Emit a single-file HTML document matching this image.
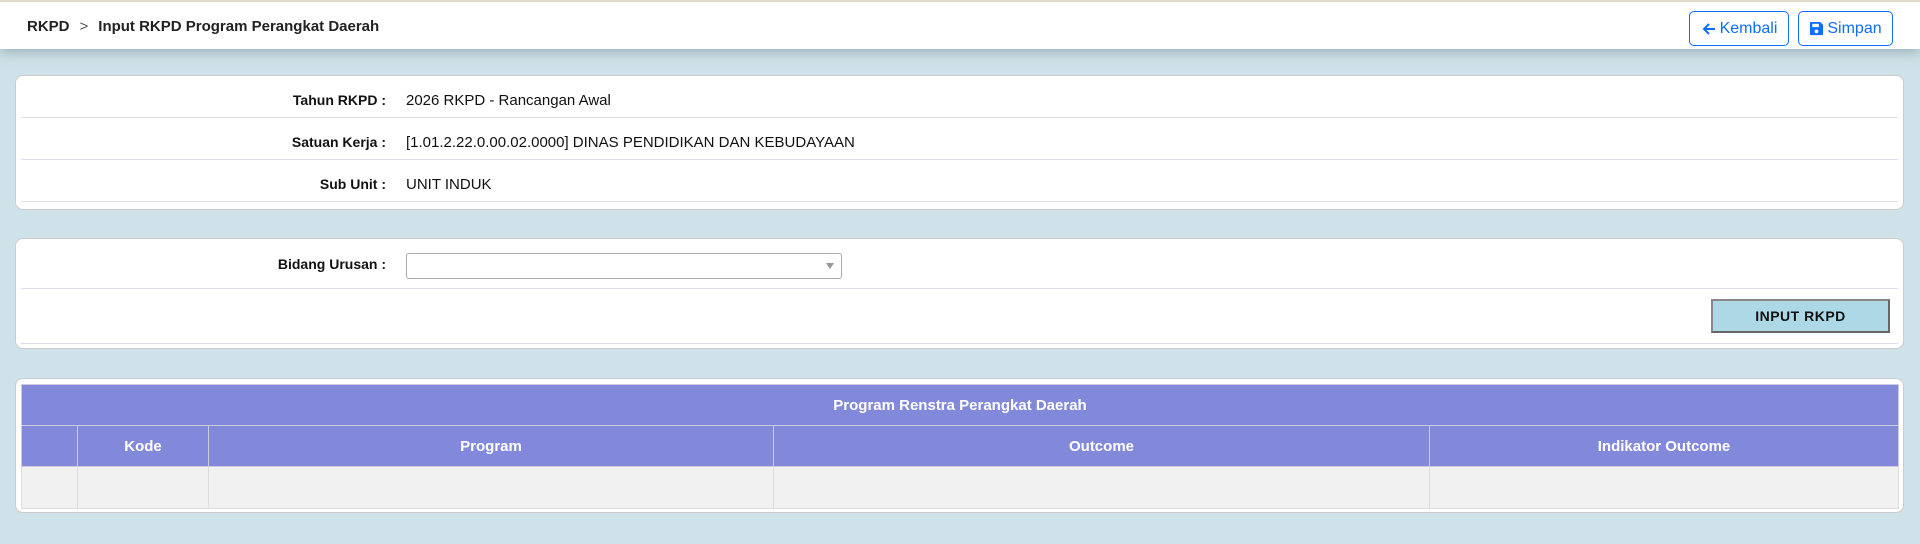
<!DOCTYPE html>
<html><head><meta charset="utf-8"><style>
*{box-sizing:border-box;margin:0;padding:0}
body{width:1920px;height:544px;background:#d0e2e9;font-family:"Liberation Sans",Tahoma,sans-serif;font-size:15px;color:#111;position:relative;overflow:hidden}
.top{position:absolute;left:0;top:0;width:1920px;height:49px;background:#fff;border-top:2px solid #e0dccb;box-shadow:0 3px 12px rgba(80,110,120,.45)}
.crumb{position:absolute;left:27px;top:16px;font-weight:bold;font-size:15px;color:#222}
.crumb span{font-weight:normal;color:#555;margin:0 10px}
.btn{position:absolute;top:9px;height:35px;border:1px solid #0d6efd;border-radius:5px;color:#0d6efd;font-size:16px;display:flex;align-items:center;justify-content:center;gap:3px;background:#fff}
.card{position:absolute;left:15px;width:1889px;background:#fff;border:1px solid #ccc;border-radius:8px}
.row{position:absolute;left:5px;right:5px;border-bottom:1px solid #dde;height:42px}
.lbl{position:absolute;right:1512px;font-weight:bold;font-size:14px;top:16px;white-space:nowrap}
.val{position:absolute;left:385px;top:16px;white-space:nowrap}
table{position:absolute;left:5px;top:5px;width:1878px;border-collapse:collapse}
th{background:#8389da;color:#fff;font-weight:bold;font-size:15px;height:41px;border:1px solid #ccd}
td{background:#f1f1f1;height:42px;border:1px solid #ddd}
</style></head><body>
<div class="top">
<div class="crumb">RKPD<span>&gt;</span>Input RKPD Program Perangkat Daerah</div>
<div class="btn" style="left:1689px;width:100px"><svg width="16" height="16" viewBox="0 0 16 16"><path d="M14 8H3M8 3L3 8l5 5" stroke="#0d6efd" stroke-width="2" fill="none"/></svg>Kembali</div>
<div class="btn" style="left:1798px;width:95px"><svg width="15" height="15" viewBox="0 0 16 16"><path d="M1 2a1 1 0 011-1h10l3 3v10a1 1 0 01-1 1H2a1 1 0 01-1-1z" fill="#0d6efd"/><rect x="3.5" y="3" width="7" height="3.5" fill="#fff"/><circle cx="8" cy="11" r="2" fill="#fff"/></svg>Simpan</div>
</div>
<div class="card" style="top:75px;height:135px">
<div class="row" style="top:0"><div class="lbl">Tahun RKPD :</div><div class="val">2026 RKPD - Rancangan Awal</div></div>
<div class="row" style="top:42px"><div class="lbl">Satuan Kerja :</div><div class="val">[1.01.2.22.0.00.02.0000] DINAS PENDIDIKAN DAN KEBUDAYAAN</div></div>
<div class="row" style="top:84px"><div class="lbl">Sub Unit :</div><div class="val">UNIT INDUK</div></div>
</div>
<div class="card" style="top:238px;height:111px">
<div class="row" style="top:0;height:50px"><div class="lbl" style="top:17px">Bidang Urusan :</div>
<div style="position:absolute;left:385px;top:14px;width:436px;height:26px;border:1px solid #aaa;border-radius:3px"><div style="position:absolute;right:7px;top:9px;border-left:4px solid transparent;border-right:4px solid transparent;border-top:6px solid #999"></div></div></div>
<div class="row" style="top:50px;height:55px;border-bottom:1px solid #dde"></div>
<div style="position:absolute;left:1695px;top:60px;width:179px;height:34px;background:#add8e6;border:2px solid #777;border-color:#888 #666 #666 #888;font-weight:bold;font-size:14px;display:flex;align-items:center;justify-content:center;letter-spacing:.5px">INPUT RKPD</div>
</div>
<div class="card" style="top:378px;height:135px">
<table>
<tr><th colspan="5">Program Renstra Perangkat Daerah</th></tr>
<tr><th style="width:56px"></th><th style="width:131px">Kode</th><th style="width:565px">Program</th><th style="width:656px">Outcome</th><th>Indikator Outcome</th></tr>
<tr><td></td><td></td><td></td><td></td><td></td></tr>
</table>
</div>
</body></html>
